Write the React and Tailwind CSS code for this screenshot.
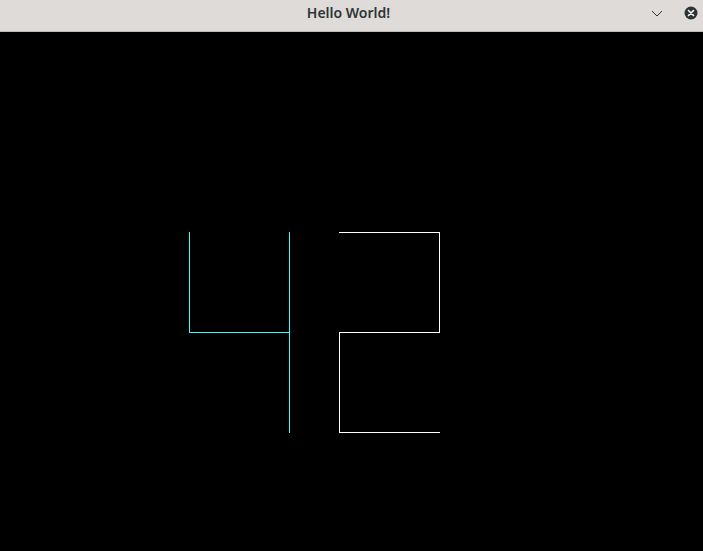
export default function App() {
  // page y offset of the drawing area is 32px
  const cyan = "#33ffff";
  const white = "#ffffff";
  return (
    <div className="flex h-[551px] w-[703px] flex-col overflow-hidden bg-black">
      <div className="relative flex h-[32px] shrink-0 items-center justify-center border-b border-[#bfbab5] bg-[#dedbd8] pb-[6px] pr-[6px]">
        <span
          className="text-[14px] font-semibold text-[#2e3436]"
          style={{ fontFamily: '"Noto Sans", "DejaVu Sans", sans-serif' }}
        >
          Hello World!
        </span>
        <div className="absolute right-[5px] top-0 flex h-[26px] items-center gap-[20px]">
          <svg width="14" height="14" viewBox="0 0 14 14">
            <path d="M2 5 L7 10 L12 5" fill="none" stroke="#2e3436" strokeWidth="1" />
          </svg>
          <svg width="14" height="14" viewBox="0 0 14 14">
            <circle cx="7" cy="7" r="6.5" fill="#2e3436" />
            <path d="M4.5 4.5 L9.5 9.5 M9.5 4.5 L4.5 9.5" stroke="#fff" strokeWidth="1.6" strokeLinecap="round" />
          </svg>
        </div>
      </div>
      <svg width="703" height="519" viewBox="0 0 703 519" className="block">
        <g fill="none" strokeWidth="1" shapeRendering="crispEdges">
          <path d="M189.5 200 V300.5 H289.5" stroke={cyan} />
          <path d="M289.5 200 V401" stroke={cyan} />
          <path d="M339 200.5 H439.5 V300.5 H339.5 V400.5 H440" stroke={white} />
        </g>
      </svg>
    </div>
  );
}
